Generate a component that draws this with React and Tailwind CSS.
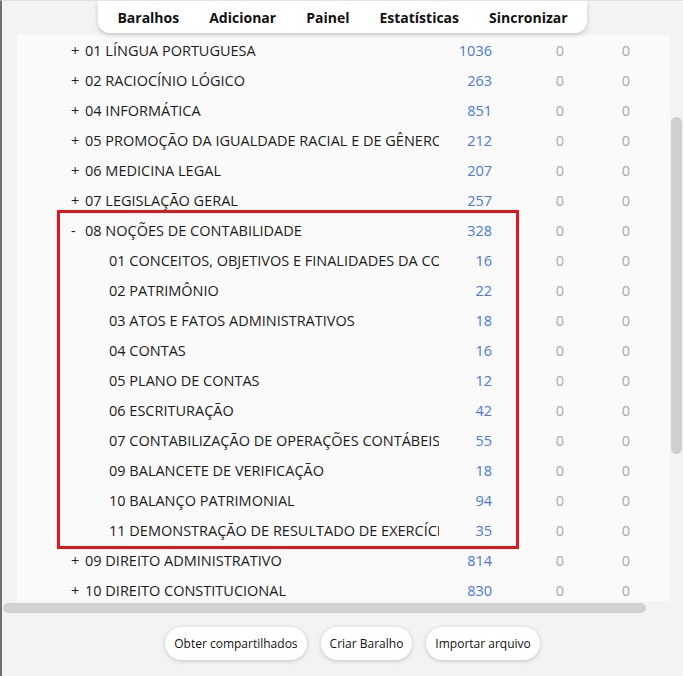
import React from 'react';

const topDecks = [
  { name: '01 LÍNGUA PORTUGUESA', count: 1036 },
  { name: '02 RACIOCÍNIO LÓGICO', count: 263 },
  { name: '04 INFORMÁTICA', count: 851 },
  { name: '05 PROMOÇÃO DA IGUALDADE RACIAL E DE GÊNERO', count: 212 },
  { name: '06 MEDICINA LEGAL', count: 207 },
  { name: '07 LEGISLAÇÃO GERAL', count: 257 },
];

const subDecks = [
  { name: '01 CONCEITOS, OBJETIVOS E FINALIDADES DA CONTABILIDADE', count: 16 },
  { name: '02 PATRIMÔNIO', count: 22 },
  { name: '03 ATOS E FATOS ADMINISTRATIVOS', count: 18 },
  { name: '04 CONTAS', count: 16 },
  { name: '05 PLANO DE CONTAS', count: 12 },
  { name: '06 ESCRITURAÇÃO', count: 42 },
  { name: '07 CONTABILIZAÇÃO DE OPERAÇÕES CONTÁBEIS', count: 55 },
  { name: '09 BALANCETE DE VERIFICAÇÃO', count: 18 },
  { name: '10 BALANÇO PATRIMONIAL', count: 94 },
  { name: '11 DEMONSTRAÇÃO DE RESULTADO DE EXERCÍCIO', count: 35 },
];

const bottomDecks = [
  { name: '09 DIREITO ADMINISTRATIVO', count: 814 },
  { name: '10 DIREITO CONSTITUCIONAL', count: 830 },
];

const DeckRow = ({ deck, prefix, child }) => (
  <div className="flex items-center h-[30px] shrink-0 pt-[2px] pl-[54px] text-[14.5px]">
    <div className="w-[368px] overflow-hidden whitespace-nowrap text-[#1b1b1b]">
      {child ? (
        <span className="pl-[38px]">{deck.name}</span>
      ) : (
        <>
          <span className="inline-block w-[14px]">{prefix}</span>
          {deck.name}
        </>
      )}
    </div>
    <div className="w-[53px] text-right text-[#4b79d4]">{deck.count}</div>
    <div className="ml-[35px] w-[66px] text-center text-[#a9a9a9]">0</div>
    <div className="w-[66px] text-center text-[#a9a9a9]">0</div>
  </div>
);

const navItems = ['Baralhos', 'Adicionar', 'Painel', 'Estatísticas', 'Sincronizar'];
const buttons = ['Obter compartilhados', 'Criar Baralho', 'Importar arquivo'];

export default function App() {
  return (
    <div className="h-[676px] w-[683px] overflow-hidden bg-[#f3f3f3] border-l-2 border-l-[#707070] border-t border-t-[#e2e2e2] flex flex-col font-['Segoe_UI','Open_Sans',sans-serif]">
      {/* Top toolbar */}
      <div className="h-[34px] shrink-0 flex justify-center relative z-10">
        <nav className="h-[32px] flex items-center gap-[30px] px-[19px] bg-white rounded-b-[12px] shadow-[0_2px_5px_rgba(0,0,0,0.18)]">
          {navItems.map((item) => (
            <span key={item} className="text-[14px] font-bold text-[#111]">
              {item}
            </span>
          ))}
        </nav>
      </div>

      {/* Deck list + vertical scrollbar */}
      <div className="h-[566px] shrink-0 flex">
        <div className="ml-[15px] w-[653px] bg-[#fafafa] overflow-hidden flex flex-col">
          {topDecks.map((d) => (
            <DeckRow key={d.name} deck={d} prefix="+" />
          ))}
          <div className="relative flex flex-col">
            <DeckRow deck={{ name: '08 NOÇÕES DE CONTABILIDADE', count: 328 }} prefix="-" />
            {subDecks.map((d) => (
              <DeckRow key={d.name} deck={d} child />
            ))}
            <div className="absolute -top-[5px] -bottom-[4px] left-[40px] w-[462px] border-[3px] border-[#e3161b] pointer-events-none" />
          </div>
          {bottomDecks.map((d) => (
            <DeckRow key={d.name} deck={d} prefix="+" />
          ))}
        </div>
        <div className="ml-[1px] w-[11px]">
          <div className="mt-[82px] h-[337px] rounded-full bg-[#cfcfcf]" />
        </div>
      </div>

      {/* Horizontal scrollbar */}
      <div className="mt-[2px] ml-[1px] h-[10px] w-[643px] shrink-0 rounded-full bg-[#d2d2d2]" />

      {/* Bottom actions */}
      <div className="mt-[14px] flex justify-center gap-[14px] pl-[20px]">
        {buttons.map((b) => (
          <button
            key={b}
            className="h-[33px] px-[9px] rounded-full bg-white text-[12px] font-medium text-[#111] shadow-[0_1px_4px_rgba(0,0,0,0.2)]"
          >
            {b}
          </button>
        ))}
      </div>
    </div>
  );
}
